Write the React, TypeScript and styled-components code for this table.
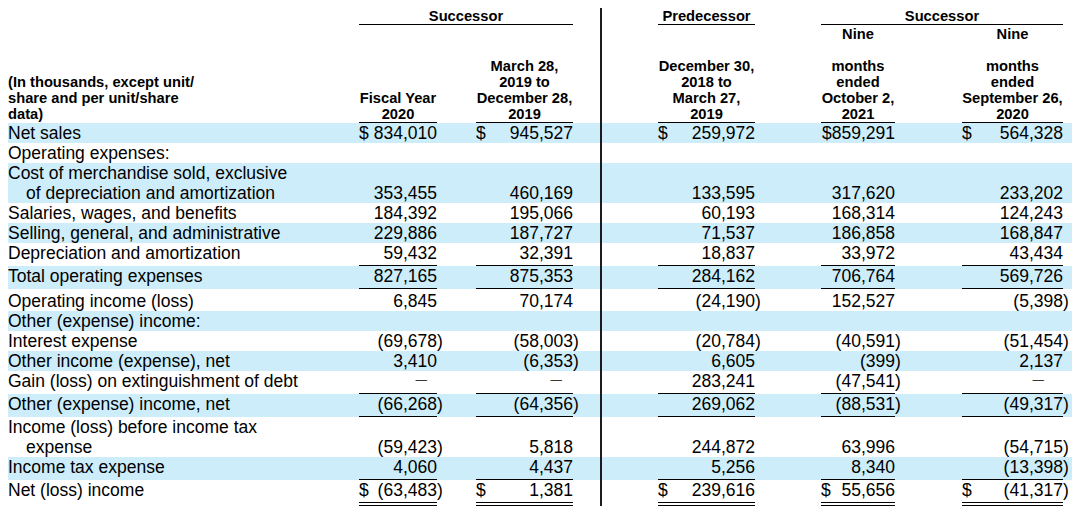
import React from 'react';
import styled, { createGlobalStyle, css } from 'styled-components';

const GlobalStyle = createGlobalStyle`
  html, body { padding: 0; background: #ffffff; }
  body {
    margin: 8px;
    font-family: "Liberation Sans", Arial, Helvetica, sans-serif;
    color: #000000;
  }
`;

/* label | c1 | gap | c2 | gap(divider) | c3 | gap | c4 | gap | c5 | tail */
const COLS = '351px 78px 39px 97px 85px 97px 66px 74px 67px 101px 10px';
const VALUE_COLS = [2, 4, 6, 8, 10];
const DASH_INSET = [10, 11, 11, 11, 19];

type Rule = 'none' | 'single' | 'double';

const ruleSpace = (r: Rule) => (r === 'single' ? 3 : r === 'double' ? 6 : 0);

const Sheet = styled.div`
  position: relative;
  width: 1065px;
`;

const Divider = styled.div`
  position: absolute;
  left: 592px;
  top: 0;
  bottom: 0;
  width: 2px;
  background: #1c1c1c;
`;

const GroupRow = styled.div`
  display: grid;
  grid-template-columns: ${COLS};
  padding-top: 1px;
`;

const GroupTitle = styled.div<{ $from: number; $to: number }>`
  grid-column: ${(p) => p.$from} / ${(p) => p.$to + 1};
  text-align: center;
  font-weight: 700;
  font-size: 14.7px;
  line-height: 15px;
  border-bottom: 1px solid #000;
  white-space: nowrap;
`;

const HeaderRow = styled.div`
  display: grid;
  grid-template-columns: ${COLS};
  align-items: end;
  padding-top: 1px;
  font-weight: 700;
  font-size: 14.7px;
  line-height: 16px;
`;

const HeadLabel = styled.div`
  grid-column: 1;
  padding-bottom: 1px;
  white-space: nowrap;
`;

const HeadCell = styled.div<{ $col: number }>`
  grid-column: ${(p) => p.$col};
  text-align: center;
  border-bottom: 1px solid #000;
  white-space: nowrap;
`;

const Line = styled.div<{ $indent?: boolean }>`
  padding-left: ${(p) => (p.$indent ? 18 : 0)}px;
`;

const DataRow = styled.div<{ $shade: boolean; $top: number }>`
  display: grid;
  grid-template-columns: ${COLS};
  align-items: end;
  padding-top: ${(p) => p.$top}px;
  background: ${(p) => (p.$shade ? '#cdedfb' : 'transparent')};
  font-size: 17.5px;
  line-height: 20px;
`;

const RowLabel = styled.div<{ $rule: Rule }>`
  grid-column: 1;
  white-space: nowrap;
  padding-bottom: ${(p) => ruleSpace(p.$rule)}px;
`;

const ValueCell = styled.div<{ $col: number; $rule: Rule }>`
  grid-column: ${(p) => p.$col};
  display: flex;
  align-items: baseline;
  white-space: nowrap;
  ${(p) =>
    p.$rule === 'single' &&
    css`
      padding-bottom: 2px;
      border-bottom: 1px solid #000;
    `}
  ${(p) =>
    p.$rule === 'double' &&
    css`
      padding-bottom: 2px;
      border-bottom: 4px double #000;
    `}
`;

const Currency = styled.span``;

const Amount = styled.span<{ $neg: boolean }>`
  margin-left: auto;
  margin-right: ${(p) => (p.$neg ? '-5.8px' : '0')};
`;

const Dash = styled.span<{ $inset: number }>`
  margin-left: auto;
  margin-right: ${(p) => p.$inset}px;
  font-size: 11.5px;
  transform: translateY(-2px);
`;

type RowSpec = {
  label: string[];
  shade?: boolean;
  rule?: Rule;
  top?: number;
  vals?: string[];
};

const rows: RowSpec[] = [
  { label: ['Net sales'], shade: true, vals: ['$ 834,010', '$ 945,527', '$ 259,972', '$859,291', '$ 564,328'] },
  { label: ['Operating expenses:'] },
  {
    label: ['Cost of merchandise sold, exclusive', 'of depreciation and amortization'],
    shade: true,
    vals: ['353,455', '460,169', '133,595', '317,620', '233,202'],
  },
  { label: ['Salaries, wages, and benefits'], vals: ['184,392', '195,066', '60,193', '168,314', '124,243'] },
  { label: ['Selling, general, and administrative'], shade: true, vals: ['229,886', '187,727', '71,537', '186,858', '168,847'] },
  { label: ['Depreciation and amortization'], rule: 'single', vals: ['59,432', '32,391', '18,837', '33,972', '43,434'] },
  { label: ['Total operating expenses'], shade: true, rule: 'single', vals: ['827,165', '875,353', '284,162', '706,764', '569,726'] },
  { label: ['Operating income (loss)'], top: 2, vals: ['6,845', '70,174', '(24,190)', '152,527', '(5,398)'] },
  { label: ['Other (expense) income:'], shade: true },
  { label: ['Interest expense'], vals: ['(69,678)', '(58,003)', '(20,784)', '(40,591)', '(51,454)'] },
  { label: ['Other income (expense), net'], shade: true, vals: ['3,410', '(6,353)', '6,605', '(399)', '2,137'] },
  { label: ['Gain (loss) on extinguishment of debt'], rule: 'single', vals: ['—', '—', '283,241', '(47,541)', '—'] },
  { label: ['Other (expense) income, net'], shade: true, rule: 'single', vals: ['(66,268)', '(64,356)', '269,062', '(88,531)', '(49,317)'] },
  { label: ['Income (loss) before income tax', 'expense'], vals: ['(59,423)', '5,818', '244,872', '63,996', '(54,715)'] },
  { label: ['Income tax expense'], shade: true, rule: 'single', vals: ['4,060', '4,437', '5,256', '8,340', '(13,398)'] },
  { label: ['Net (loss) income'], rule: 'double', vals: ['$ (63,483)', '$ 1,381', '$ 239,616', '$ 55,656', '$ (41,317)'] },
];

const headers: { col: number; lines: string[] }[] = [
  { col: 2, lines: ['Fiscal Year', '2020'] },
  { col: 4, lines: ['March 28,', '2019 to', 'December 28,', '2019'] },
  { col: 6, lines: ['December 30,', '2018 to', 'March 27,', '2019'] },
  { col: 8, lines: ['Nine', '\u00a0', 'months', 'ended', 'October 2,', '2021'] },
  { col: 10, lines: ['Nine', '\u00a0', 'months', 'ended', 'September 26,', '2020'] },
];

function Value({ v, idx }: { v: string; idx: number }) {
  if (v === '—') return <Dash $inset={DASH_INSET[idx]}>—</Dash>;
  const hasCur = v.startsWith('$ ');
  const num = hasCur ? v.slice(2) : v;
  return (
    <>
      {hasCur && <Currency>$</Currency>}
      <Amount $neg={num.endsWith(')')}>{num}</Amount>
    </>
  );
}

export default function App() {
  return (
    <>
      <GlobalStyle />
      <Sheet>
        <GroupRow>
          <GroupTitle $from={2} $to={4}>Successor</GroupTitle>
          <GroupTitle $from={6} $to={6}>Predecessor</GroupTitle>
          <GroupTitle $from={8} $to={10}>Successor</GroupTitle>
        </GroupRow>
        <HeaderRow>
          <HeadLabel>
            <Line>(In thousands, except unit/</Line>
            <Line>share and per unit/share</Line>
            <Line>data)</Line>
          </HeadLabel>
          {headers.map((h) => (
            <HeadCell key={h.col} $col={h.col}>
              {h.lines.map((l, i) => (
                <Line key={i}>{l}</Line>
              ))}
            </HeadCell>
          ))}
        </HeaderRow>
        {rows.map((r, ri) => {
          const rule: Rule = r.rule ?? 'none';
          return (
            <DataRow key={ri} $shade={!!r.shade} $top={r.top ?? 0}>
              <RowLabel $rule={rule}>
                {r.label.map((l, i) => (
                  <Line key={i} $indent={i > 0}>
                    {l}
                  </Line>
                ))}
              </RowLabel>
              {r.vals &&
                r.vals.map((v, i) => (
                  <ValueCell key={i} $col={VALUE_COLS[i]} $rule={rule}>
                    <Value v={v} idx={i} />
                  </ValueCell>
                ))}
            </DataRow>
          );
        })}
        <Divider />
      </Sheet>
    </>
  );
}
